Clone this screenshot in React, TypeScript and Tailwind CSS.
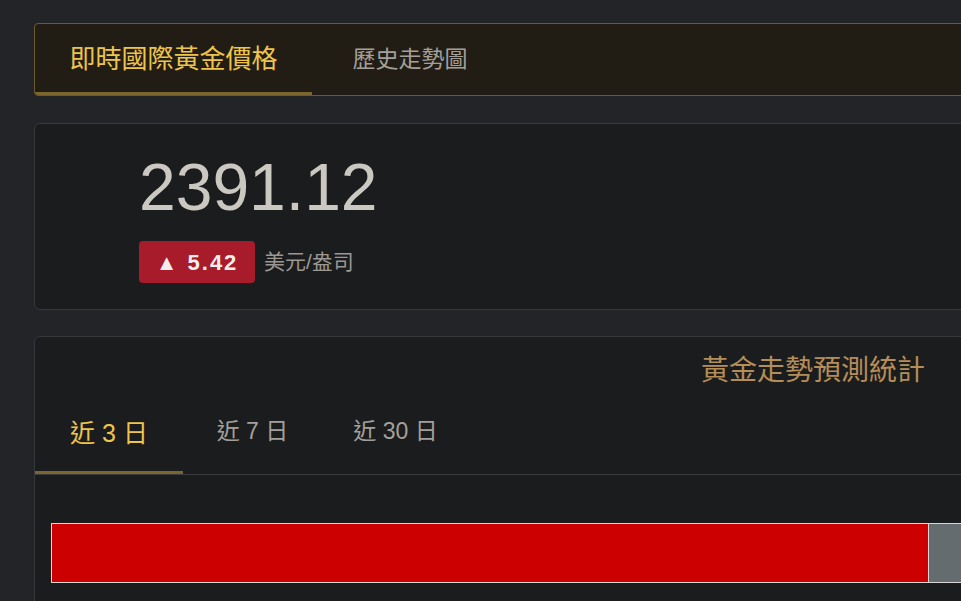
const cjk = { fontFamily: '"Liberation Sans", "Noto Sans CJK TC", sans-serif' };

const App = () => {
  const ranges = [
    { label: "近 3 日", w: "w-[148px]" },
    { label: "近 7 日", w: "w-[139px]" },
    { label: "近 30 日", w: "w-[147px]" },
  ];
  return (
    <div className="w-screen h-screen overflow-hidden bg-[#232427]" style={cjk}>
      <div className="pl-[34px] pt-[23px] w-[1200px] flex flex-col gap-[27px]">
        {/* tab bar */}
        <div className="h-[73px] flex border border-[#6b5a2c] rounded-[4px] bg-[#211d14] overflow-hidden">
          <div className="w-[277px] flex items-center justify-center border-b-[3px] border-[#7c6630] text-[26px] text-[#eec44c] pt-[2px]">
            即時國際黃金價格
          </div>
          <div className="w-[196px] flex items-center justify-center text-[23px] text-[#a3a09b]">
            歷史走勢圖
          </div>
        </div>

        {/* price */}
        <div className="h-[187px] border border-[#37383b] rounded-[6px] bg-[#1b1c1e] pl-[104px] pt-[25px]">
          <div className="text-[66px] leading-[76px] text-[#cbc7c1]">2391.12</div>
          <div className="flex items-center gap-[9px] mt-[16px]">
            <div className="h-[42px] w-[116px] flex items-center justify-center rounded-[4px] bg-[#a81b2b] text-[22px] font-bold text-[#f3eeee] tracking-[2px]">
              ▲ 5.42
            </div>
            <div className="text-[21px] text-[#9b9893]">美元/盎司</div>
          </div>
        </div>

        {/* forecast */}
        <div className="h-[300px] -mt-px border border-[#37383b] rounded-[6px] bg-[#1b1c1e] flex flex-col">
          <div className="pl-[666px] pt-[14px] text-[28px] leading-[40px] text-[#b48d58]">
            黃金走勢預測統計
          </div>
          <div className="mt-[20px] flex border-b border-[#3a3b3e]">
            {ranges.map((r, i) => (
              <div
                key={r.label}
                className={
                  i === 0
                    ? `${r.w} h-[63px] flex items-start justify-center pt-[4px] text-[25px] text-[#eec44c] border-b-[3px] border-[#7c6630] -mb-px`
                    : `${r.w} h-[63px] flex items-start justify-center pt-[3px] text-[23px] text-[#a3a09b]`
                }
              >
                {r.label}
              </div>
            ))}
          </div>
          <div className="px-[16px] pt-[48px]">
            <div className="h-[60px] flex border border-[#d9d6d3]">
              <div className="w-[877px] bg-[#cc0000] border-r border-[#d9d6d3]" />
              <div className="flex-1 bg-[#646c70]" />
            </div>
          </div>
        </div>
      </div>
    </div>
  );
};

export default App;
